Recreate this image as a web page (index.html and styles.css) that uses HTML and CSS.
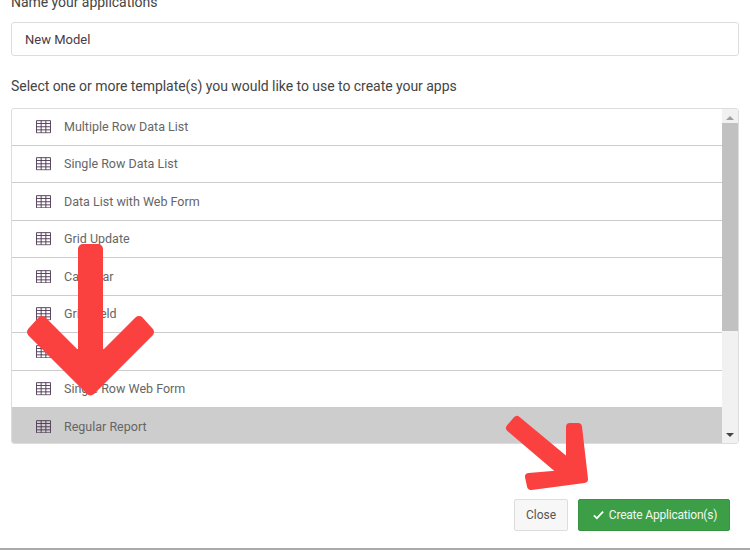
FILE: index.html
```html
<!DOCTYPE html>
<html lang="en">
<head>
<meta charset="utf-8">
<title>Create Application</title>
<link rel="stylesheet" href="styles.css">
</head>
<body>
<svg width="0" height="0" class="defs" aria-hidden="true">
  <symbol id="grid" viewBox="0 0 16 14">
    <path d="M.5.5h15v13H.5z M.5 3.5h15 M.5 7h15 M.5 10.3h15 M5.5 .5v13 M10.5 .5v13" fill="none" stroke="#4f3a55" stroke-width="1"/>
  </symbol>
</svg>
<main class="page">
  <label class="label first">Name your applications</label>
  <div class="input">New Model</div>
  <label class="label second">Select one or more template(s) you would like to use to create your apps</label>
  <div class="listbox">
    <ul class="list">
      <li class="row"><svg class="ico"><use href="#grid"/></svg>Multiple Row Data List</li>
      <li class="row"><svg class="ico"><use href="#grid"/></svg>Single Row Data List</li>
      <li class="row"><svg class="ico"><use href="#grid"/></svg>Data List with Web Form</li>
      <li class="row"><svg class="ico"><use href="#grid"/></svg>Grid Update</li>
      <li class="row"><svg class="ico"><use href="#grid"/></svg>Calendar</li>
      <li class="row"><svg class="ico"><use href="#grid"/></svg>Grid Field</li>
      <li class="row"><svg class="ico"><use href="#grid"/></svg>Web Form</li>
      <li class="row"><svg class="ico"><use href="#grid"/></svg>Single Row Web Form</li>
      <li class="row selected"><svg class="ico"><use href="#grid"/></svg>Regular Report</li>
    </ul>
    <div class="scrollbar">
      <span class="tri up"></span>
      <span class="thumb"></span>
      <span class="tri down"></span>
    </div>
  </div>
  <div class="actions">
    <button class="btn close">Close</button>
    <button class="btn create"><svg class="check" viewBox="0 0 12 10"><path d="M1 5.5 4.2 8.6 11 1.2" fill="none" stroke="#fff" stroke-width="2"/></svg>Create Application(s)</button>
  </div>
</main>
<svg class="arrows" viewBox="0 0 750 550" aria-hidden="true">
  <polygon class="arrow big" points="83,249 98,249 98,362 139,321 149,332 90.5,390.5 32,332 42,321 83,362"/>
  <polygon class="arrow small" points="510,428 517,420 570,464 570,427 578,427 584,479 531,486 529,477 564,474"/>
</svg>
</body>
</html>
```
FILE: styles.css
```css
* { box-sizing: border-box; }
html, body { margin: 0; height: 100%; }
body {
  position: relative;
  width: 750px;
  height: 550px;
  overflow: hidden;
  background: #fff;
  font-family: Roboto, "Liberation Sans", sans-serif;
  color: #444;
}
.defs { position: absolute; }
.page {
  height: 557px;
  padding: 0 11px;
  border-bottom: 2px solid #aaa;
  margin-top: -7px;
}
.label { display: block; font-size: 14px; line-height: 18px; color: #444; letter-spacing: -0.04px; }
.first { margin-bottom: 11px; }
.second { margin-top: 21px; margin-bottom: 13px; }
.input {
  height: 34px;
  border: 1px solid #ddd;
  border-radius: 3px;
  padding: 0 13px;
  font-size: 13px;
  line-height: 34px;
  color: #4c3a44;
}
.listbox {
  display: flex;
  height: 336px;
  border: 1px solid #ddd;
  border-radius: 3px;
  overflow: hidden;
}
.list { flex: 1; margin: 0; padding: 0; list-style: none; }
.row {
  display: flex;
  align-items: center;
  height: 37.5px;
  padding-left: 24px;
  border-bottom: 1px solid #ccc;
  font-size: 12.5px;
  color: #666;
}
.row:first-child { height: 36.5px; }
.row.selected { background: #cdcdcd; border-bottom: 0; height: 37px; }
.ico { width: 15px; height: 13.5px; margin-right: 13px; }
.scrollbar {
  width: 16px;
  background: #f1f1f1;
  display: flex;
  flex-direction: column;
  align-items: center;
}
.thumb { width: 100%; height: 208px; background: #c1c1c1; margin-top: 3px; }
.tri { width: 0; height: 0; border-left: 4px solid transparent; border-right: 4px solid transparent; }
.tri.up { border-bottom: 4px solid #a0a0a0; margin-top: 7px; }
.tri.down { border-top: 4px solid #444; margin-top: auto; margin-bottom: 6px; }
.actions {
  display: flex;
  justify-content: flex-end;
  gap: 10px;
  margin-top: 55px;
  padding-right: 9px;
}
.btn {
  height: 32px;
  font-family: inherit;
  font-size: 12px;
  border-radius: 2px;
  display: flex;
  align-items: center;
  justify-content: center;
}
.close { width: 54px; background: #f7f7f7; border: 1px solid #ddd; color: #555; }
.create { width: 152px; background: #3c9e47; border: 1px solid #37933f; color: #f2f8f2; letter-spacing: -0.2px; padding-left: 8px; }
.check { width: 11px; height: 10px; margin-right: 5px; }
.arrows { position: absolute; left: 0; top: 0; width: 750px; height: 550px; }
.arrow { fill: #fb4040; stroke: #fb4040; stroke-linejoin: round; }
.big { stroke-width: 10px; }
.small { stroke-width: 8px; }
```
